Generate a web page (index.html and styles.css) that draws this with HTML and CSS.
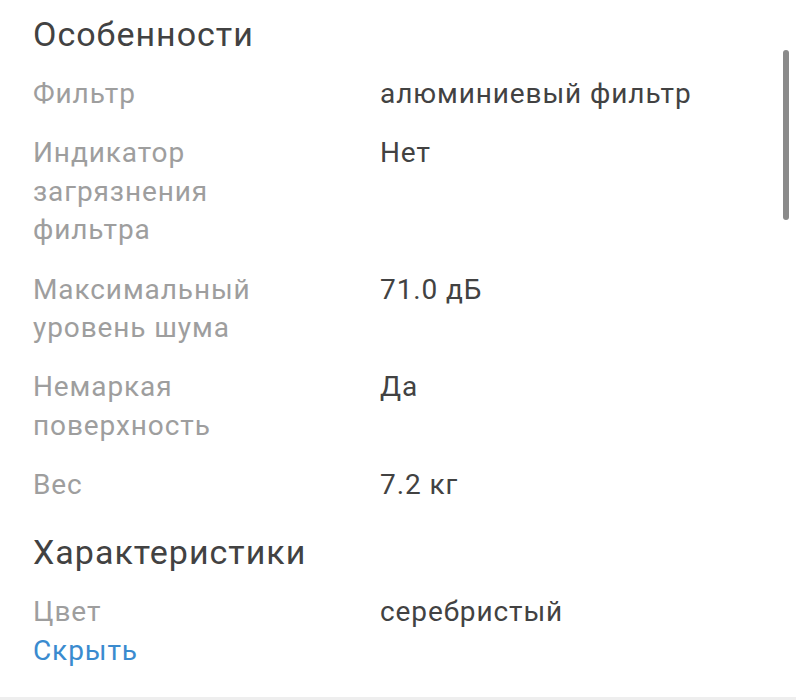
FILE: index.html
```html
<!DOCTYPE html>
<html lang="ru">
<head>
<meta charset="utf-8">
<link rel="stylesheet" href="styles.css">
</head>
<body>
<div class="page">
  <section class="section">
    <h2 class="title">Особенности</h2>
    <div class="rows">
      <div class="row"><div class="label">Фильтр</div><div class="value">алюминиевый фильтр</div></div>
      <div class="row"><div class="label">Индикатор<br>загрязнения<br>фильтра</div><div class="value">Нет</div></div>
      <div class="row"><div class="label">Максимальный<br>уровень шума</div><div class="value">71.0 дБ</div></div>
      <div class="row"><div class="label">Немаркая<br>поверхность</div><div class="value">Да</div></div>
      <div class="row"><div class="label">Вес</div><div class="value">7.2 кг</div></div>
    </div>
  </section>
  <section class="section section-2">
    <h2 class="title">Характеристики</h2>
    <div class="rows">
      <div class="row"><div class="label">Цвет</div><div class="value">серебристый</div></div>
    </div>
    <a class="hide-link" href="#">Скрыть</a>
  </section>
  <div class="scrollbar"></div>
</div>
<div class="footer-band"></div>
</body>
</html>
```
FILE: styles.css
```css
html, body {
  margin: 0;
  padding: 0;
  background: #ffffff;
}
body {
  font-family: Roboto, "Noto Sans", "Liberation Sans", sans-serif;
  width: 796px;
  height: 700px;
  overflow: hidden;
  display: flex;
  flex-direction: column;
}
.page {
  position: relative;
  flex: 1;
  padding: 12px 0 0 33px;
}
.title {
  margin: 0;
  font-size: 34px;
  line-height: 44px;
  font-weight: 400;
  letter-spacing: 1px;
  color: #424242;
}
.rows {
  display: flex;
  flex-direction: column;
  gap: 21.2px;
  margin-top: 19px;
}
.row {
  display: grid;
  grid-template-columns: 347px 1fr;
  font-size: 28px;
  line-height: 38.3px;
  letter-spacing: 0.9px;
}
.label {
  color: #9e9e9e;
}
.value {
  color: #424242;
}
.section-2 {
  margin-top: 26px;
}
.hide-link {
  display: block;
  font-size: 28px;
  line-height: 38px;
  letter-spacing: 0.9px;
  color: #3a8bcf;
  text-decoration: none;
}
.scrollbar {
  position: absolute;
  left: 783px;
  top: 50px;
  width: 6px;
  height: 170px;
  border-radius: 3px;
  background: #8a8a8a;
}
.footer-band {
  height: 3px;
  background: #eeeeee;
}
```
